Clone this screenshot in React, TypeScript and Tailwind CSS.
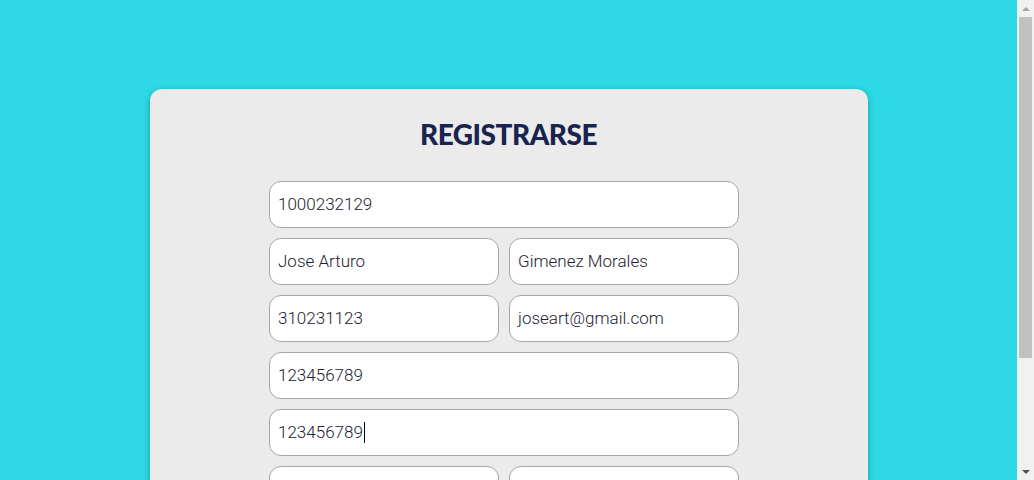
const Field = ({ value, caret }: { value?: string; caret?: boolean }) => {
    return (
        <div className="flex items-center h-[47px] w-full bg-white border border-[#a9a69e] rounded-xl px-[8px] text-[17px] font-light text-[#1c2230]">
            <span>{value}</span>
            {caret && <span className="ml-[1px] h-[21px] w-[1px] bg-black"></span>}
        </div>
    )
}

const Scrollbar = () => {
    return (
        <div className="w-[17px] h-full bg-[#f1f1f1] flex flex-col items-center shrink-0">
            <div className="h-[17px] flex items-center justify-center">
                <div className="w-0 h-0 border-l-[4px] border-r-[4px] border-b-[4px] border-l-transparent border-r-transparent border-b-[#a3a3a3]"></div>
            </div>
            <div className="w-[13px] h-[341px] bg-[#c1c1c1]"></div>
            <div className="flex-1"></div>
            <div className="h-[17px] flex items-center justify-center">
                <div className="w-0 h-0 border-l-[4px] border-r-[4px] border-t-[4px] border-l-transparent border-r-transparent border-t-[#505050]"></div>
            </div>
        </div>
    )
}

const App = () => {
    return (
        <div className="flex h-screen overflow-hidden font-['Roboto',sans-serif]">
            <div className="flex-1 h-full overflow-hidden bg-[#2cd9e4]">
                <div className="pt-[89px] pb-[28px]">
                    <div className="mx-auto w-[718px] bg-[#ebebeb] rounded-xl shadow-[0_2px_6px_rgba(0,0,0,0.3)] pt-[27px] pb-[30px] flex flex-col items-center">
                        <div className="font-['Lato',sans-serif] font-black text-[28px] leading-[36px] text-[#18234f] tracking-[-0.5px]">
                            REGISTRARSE
                        </div>

                        <div className="w-[481px] pl-[1px] pr-[10px] mt-[29px] flex flex-col gap-[10px]">
                            <Field value="1000232129" />

                            <div className="grid grid-cols-2 gap-[10px]">
                                <Field value="Jose Arturo" />
                                <Field value="Gimenez Morales" />
                            </div>

                            <div className="grid grid-cols-2 gap-[10px]">
                                <Field value="310231123" />
                                <Field value="joseart@gmail.com" />
                            </div>

                            <Field value="123456789" />
                            <Field value="123456789" caret />

                            <div className="grid grid-cols-2 gap-[10px]">
                                <Field />
                                <Field />
                            </div>

                            <button className="h-[47px] w-full rounded-xl bg-[#18234f] text-white font-bold text-[18px]">
                                Registrarse
                            </button>
                        </div>
                    </div>
                </div>
            </div>
            <Scrollbar />
        </div>
    )
}

export default App
